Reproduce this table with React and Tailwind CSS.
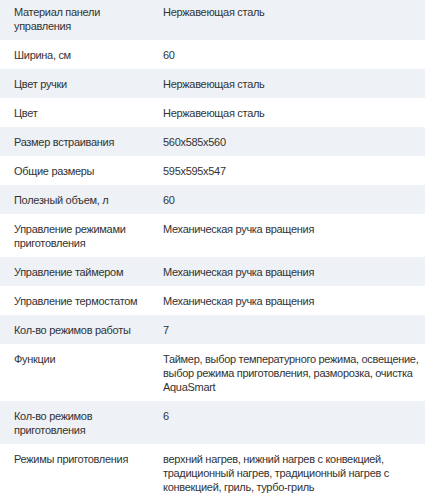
import React from "react";

const specs = [
  ["Материал панели управления", "Нержавеющая сталь"],
  ["Ширина, см", "60"],
  ["Цвет ручки", "Нержавеющая сталь"],
  ["Цвет", "Нержавеющая сталь"],
  ["Размер встраивания", "560x585x560"],
  ["Общие размеры", "595x595x547"],
  ["Полезный объем, л", "60"],
  ["Управление режимами приготовления", "Механическая ручка вращения"],
  ["Управление таймером", "Механическая ручка вращения"],
  ["Управление термостатом", "Механическая ручка вращения"],
  ["Кол-во режимов работы", "7"],
  [
    "Функции",
    "Таймер, выбор температурного режима, освещение, выбор режима приготовления, разморозка, очистка AquaSmart",
  ],
  ["Кол-во режимов приготовления", "6"],
  [
    "Режимы приготовления",
    "верхний нагрев, нижний нагрев с конвекцией, традиционный нагрев, традиционный нагрев с конвекцией, гриль, турбо-гриль",
  ],
];

const App = () => {
  return (
    <div className="w-[425px] bg-white text-[11px] tracking-[-0.3px] leading-[14px] text-[#333] font-[family-name:'Liberation_Sans',Arial,sans-serif]">
      {specs.map(([label, value], index) => (
        <div
          key={index}
          className={`grid grid-cols-[163px_1fr] pb-[7.5px] ${
            index === 0 ? "pt-[4.5px]" : "pt-[7.5px]"
          } ${index % 2 === 0 ? "bg-[#eef1f5]" : "bg-white"}`}
        >
          <div className="pl-[14px] pr-[12px]">{label}</div>
          <div>{value}</div>
        </div>
      ))}
    </div>
  );
};

export default App;
